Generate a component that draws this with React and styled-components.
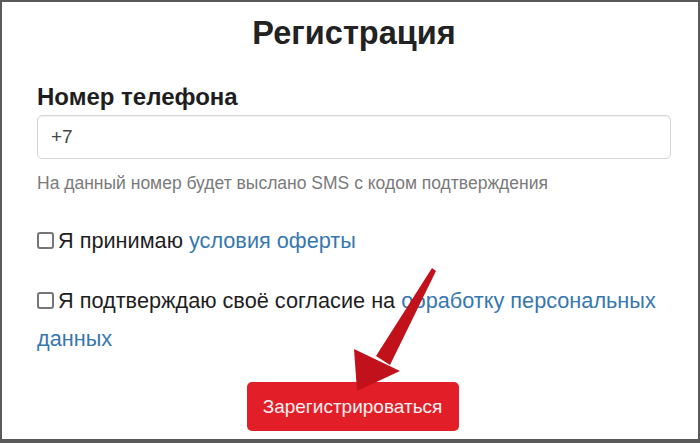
import React from "react";
import styled, { createGlobalStyle } from "styled-components";

const GlobalStyle = createGlobalStyle`
  html, body {
    margin: 0;
    padding: 0;
    background: #ffffff;
  }
  * {
    box-sizing: border-box;
  }
`;

const Frame = styled.div`
  position: relative;
  width: 700px;
  height: 443px;
  border: 2px solid #5a5a5a;
  border-bottom-width: 4px;
  background: #ffffff;
  font-family: "Liberation Sans", Arial, sans-serif;
  color: #333333;
  overflow: hidden;
`;

const Form = styled.div`
  display: flex;
  flex-direction: column;
  padding: 12px 27px 0 35px;
`;

const Title = styled.h1`
  margin: 0;
  text-align: center;
  font-size: 32.5px;
  line-height: 38px;
  font-weight: 700;
  color: #222222;
`;

const Label = styled.label`
  margin-top: 32px;
  font-size: 24px;
  line-height: 26px;
  font-weight: 700;
  color: #1e1e1e;
`;

const Input = styled.div`
  margin-top: 5px;
  height: 44px;
  border: 1px solid #d4d4d4;
  border-radius: 5px;
  padding: 0 13px;
  display: flex;
  align-items: center;
  font-size: 19px;
  color: #444444;
  box-shadow: inset 0 1px 1px rgba(0, 0, 0, 0.05);
`;

const Help = styled.p`
  margin: 12px 0 0;
  font-size: 17.5px;
  line-height: 24px;
  color: #7a7a7a;
`;

const Check = styled.div`
  margin-top: ${props => props.$gap}px;
  font-size: 21.7px;
  line-height: 38px;
  color: #1e1e1e;
`;

const Box = styled.span`
  display: inline-block;
  width: 17px;
  height: 17px;
  margin-right: 4px;
  border: 2px solid #767676;
  border-radius: 3px;
  vertical-align: -1px;
`;

const Link = styled.a`
  color: #3777b0;
  text-decoration: none;
`;

const Actions = styled.div`
  display: flex;
  justify-content: center;
  margin-top: 24px;
  padding-right: 3px;
`;

const Button = styled.button`
  width: 212px;
  height: 49px;
  border: none;
  border-radius: 5px;
  background: #e21f28;
  color: #fdf0f0;
  font-family: "Liberation Sans", Arial, sans-serif;
  font-size: 19px;
`;

const Arrow = styled.svg`
  position: absolute;
  left: 0;
  top: 0;
  pointer-events: none;
`;

export default function App() {
  return (
    <>
      <GlobalStyle />
      <Frame>
        <Form>
          <Title>Регистрация</Title>
          <Label>Номер телефона</Label>
          <Input>+7</Input>
          <Help>На данный номер будет выслано SMS с кодом подтверждения</Help>
          <Check $gap={27}>
            <Box />Я принимаю <Link>условия оферты</Link>
          </Check>
          <Check $gap={22}>
            <Box />Я подтверждаю своё согласие на <Link>обработку персональных данных</Link>
          </Check>
          <Actions>
            <Button>Зарегистрироваться</Button>
          </Actions>
        </Form>
        <Arrow width="700" height="443" viewBox="0 0 700 443">
          <polygon points="430,266 434,269 388,363 374,354" fill="#c1121c" />
          <polygon points="352,347 398,369 355,389" fill="#c1121c" />
        </Arrow>
      </Frame>
    </>
  );
}
